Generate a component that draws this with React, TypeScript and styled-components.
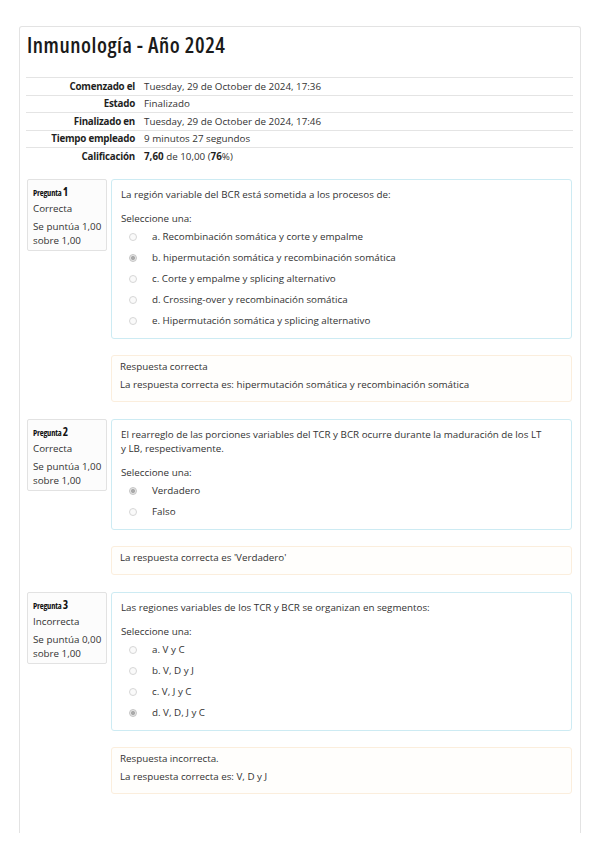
import React from 'react';
import styled, { createGlobalStyle } from 'styled-components';

const GlobalStyle = createGlobalStyle`
  html, body {
    margin: 0;
    padding: 0;
    background: #ffffff;
  }
  body {
    font-family: "Open Sans", "Liberation Sans", sans-serif;
    font-size: 9.8px;
    color: #333333;
  }
`;

type Option = { label: string; checked?: boolean };

type Question = {
  num: number;
  state: string;
  grade: string;
  text: React.ReactNode;
  options: Option[];
  feedback: string[];
};

const questions: Question[] = [
  {
    num: 1,
    state: 'Correcta',
    grade: '1,00',
    text: 'La región variable del BCR está sometida a los procesos de:',
    options: [
      { label: 'a. Recombinación somática y corte y empalme' },
      { label: 'b. hipermutación somática y recombinación somática', checked: true },
      { label: 'c. Corte y empalme y splicing alternativo' },
      { label: 'd. Crossing-over y recombinación somática' },
      { label: 'e. Hipermutación somática y splicing alternativo' },
    ],
    feedback: [
      'Respuesta correcta',
      'La respuesta correcta es: hipermutación somática y recombinación somática',
    ],
  },
  {
    num: 2,
    state: 'Correcta',
    grade: '1,00',
    text: (
      <>
        El rearreglo de las porciones variables del TCR y BCR ocurre durante la maduración de los LT
        <br />y LB, respectivamente.
      </>
    ),
    options: [{ label: 'Verdadero', checked: true }, { label: 'Falso' }],
    feedback: ["La respuesta correcta es 'Verdadero'"],
  },
  {
    num: 3,
    state: 'Incorrecta',
    grade: '0,00',
    text: 'Las regiones variables de los TCR y BCR se organizan en segmentos:',
    options: [
      { label: 'a. V y C' },
      { label: 'b. V, D y J' },
      { label: 'c. V, J y C' },
      { label: 'd. V, D, J y C', checked: true },
    ],
    feedback: ['Respuesta incorrecta.', 'La respuesta correcta es: V, D y J'],
  },
];

const App = () => {
  return (
    <Page>
      <GlobalStyle />
      <Card>
        <Title>Inmunología - Año 2024</Title>
        <Summary>
          <SummaryRow>
            <SummaryLabel>Comenzado el</SummaryLabel>
            <SummaryValue>Tuesday, 29 de October de 2024, 17:36</SummaryValue>
          </SummaryRow>
          <SummaryRow>
            <SummaryLabel>Estado</SummaryLabel>
            <SummaryValue>Finalizado</SummaryValue>
          </SummaryRow>
          <SummaryRow>
            <SummaryLabel>Finalizado en</SummaryLabel>
            <SummaryValue>Tuesday, 29 de October de 2024, 17:46</SummaryValue>
          </SummaryRow>
          <SummaryRow>
            <SummaryLabel>Tiempo empleado</SummaryLabel>
            <SummaryValue>9 minutos 27 segundos</SummaryValue>
          </SummaryRow>
          <SummaryRow>
            <SummaryLabel>Calificación</SummaryLabel>
            <SummaryValue>
              <b>7,60</b> de 10,00 (<b>76</b>%)
            </SummaryValue>
          </SummaryRow>
        </Summary>

        {questions.map((q) => (
          <QuestionBlock key={q.num}>
            <QuestionRow>
              <Info>
                <QNo>
                  Pregunta <QNum>{q.num}</QNum>
                </QNo>
                <State>{q.state}</State>
                <Grade>
                  Se puntúa {q.grade}
                  <br />
                  sobre 1,00
                </Grade>
              </Info>
              <Formulation>
                <QText>{q.text}</QText>
                <Prompt>Seleccione una:</Prompt>
                {q.options.map((o) => (
                  <OptionRow key={o.label}>
                    <Radio $checked={!!o.checked} />
                    <span>{o.label}</span>
                  </OptionRow>
                ))}
              </Formulation>
            </QuestionRow>
            <Outcome>
              {q.feedback.map((f) => (
                <OutcomeLine key={f}>{f}</OutcomeLine>
              ))}
            </Outcome>
          </QuestionBlock>
        ))}
      </Card>
    </Page>
  );
};

const Page = styled.div`
  padding: 26px 18px 0 19px;
`;

const Card = styled.div`
  box-sizing: border-box;
  height: 807px;
  border: 1px solid #e3e3e3;
  border-bottom: none;
  border-radius: 3px 3px 0 0;
  padding: 6px 7px 0 6px;
`;

const Title = styled.h2`
  margin: 0 0 20px 0;
  font-family: "Open Sans", sans-serif;
  font-weight: 600;
  font-stretch: 87.5%;
  font-size: 21.5px;
  letter-spacing: 0.55px;
  line-height: 24px;
  color: #1a1a1a;
  padding-left: 1px;
`;

const Summary = styled.div`
  margin-bottom: 14.5px;
`;

const SummaryRow = styled.div`
  box-sizing: border-box;
  display: grid;
  grid-template-columns: 118px 1fr;
  align-items: center;
  height: 17.5px;
  border-top: 1px solid #e4e4e4;
`;

const SummaryLabel = styled.div`
  text-align: right;
  padding-right: 9px;
  font-weight: 700;
  color: #1f1f1f;
  letter-spacing: -0.25px;
`;

const SummaryValue = styled.div`
  color: #333333;

  b {
    font-weight: 700;
    color: #1f1f1f;
  }
`;

const QuestionBlock = styled.div`
  margin: 0 1px 17px 1px;
`;

const QuestionRow = styled.div`
  display: flex;
  align-items: flex-start;
  gap: 4px;
`;

const Info = styled.div`
  box-sizing: border-box;
  width: 80px;
  flex-shrink: 0;
  border: 1px solid #e2e2e2;
  border-radius: 2px;
  background: #fcfcfc;
  padding: 5px 5px 2px;
  white-space: nowrap;
`;

const QNo = styled.div`
  font-weight: 700;
  font-stretch: 75%;
  font-size: 8.5px;
  line-height: 14px;
  color: #111111;
  letter-spacing: -0.2px;
`;

const QNum = styled.span`
  font-size: 11.5px;
`;

const State = styled.div`
  line-height: 14px;
  margin-top: 2px;
`;

const Grade = styled.div`
  line-height: 14px;
  margin-top: 4px;
`;

const Formulation = styled.div`
  flex: 1;
  box-sizing: border-box;
  border: 1px solid #cdebf3;
  border-radius: 3px;
  background: #ffffff;
  padding: 8px 9px 7px;
`;

const QText = styled.div`
  line-height: 14px;
  margin-bottom: 10px;
`;

const Prompt = styled.div`
  line-height: 14px;
`;

const OptionRow = styled.div`
  display: flex;
  align-items: center;
  height: 21px;
  padding-left: 8px;
`;

const Radio = styled.span<{ $checked: boolean }>`
  box-sizing: border-box;
  width: 8px;
  height: 8px;
  margin-right: 15px;
  border-radius: 50%;
  border: 1px solid ${(p) => (p.$checked ? '#c4c4c4' : '#d6d6d6')};
  background: ${(p) =>
    p.$checked
      ? 'radial-gradient(circle, #aaaaaa 0 1.8px, #e6e6e6 2.3px)'
      : '#fafafa'};
`;

const Outcome = styled.div`
  margin: 16px 0 0 84px;
  border: 1px solid #fbeedd;
  border-radius: 3px;
  background: #fffefc;
  padding: 4px 8px 5px;
`;

const OutcomeLine = styled.div`
  line-height: 14px;
  margin-bottom: 4px;
`;

export default App;
